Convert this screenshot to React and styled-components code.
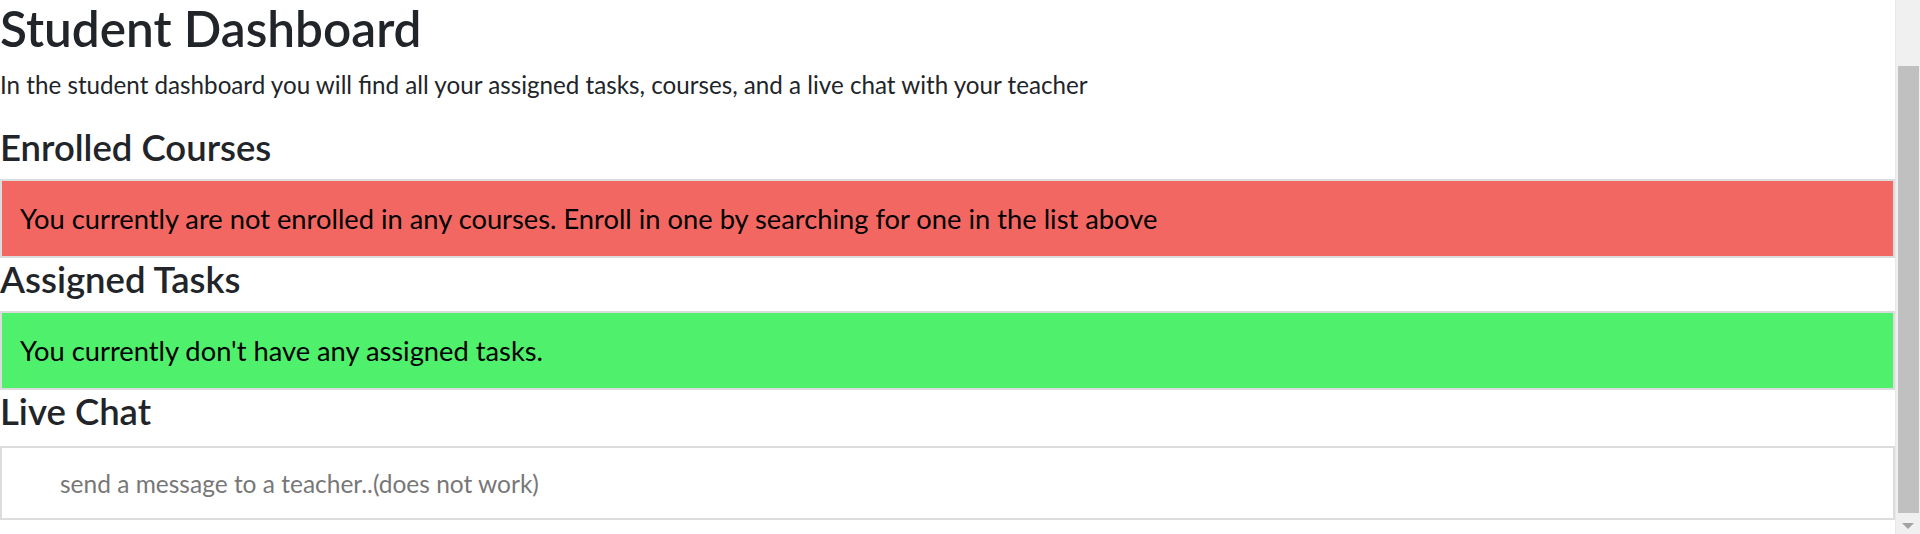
import React from 'react'
import styled, { createGlobalStyle } from 'styled-components'

const GlobalStyle = createGlobalStyle`
  html, body {
    margin: 0;
    padding: 0;
    background: #ffffff;
    overflow: hidden;
  }
  body {
    font-family: 'Lato', 'Liberation Sans', sans-serif;
    color: #212529;
  }
`;

const Page = styled.div`
  display: flex;
  align-items: flex-start;
  height: 534px;
  width: 1920px;
`;

const Main = styled.main`
  flex: 1;
  min-width: 0;
  display: flex;
  flex-direction: column;
`;

const Title = styled.h1`
  margin: 0;
  font-size: 49.5px;
  font-weight: 600;
  line-height: 56px;
`;

const Lead = styled.p`
  margin: 14px 0 0;
  font-size: 24.2px;
  line-height: 30px;
`;

const Heading = styled.h3`
  margin: ${props => props.first ? '26px' : '0'} 0 11px;
  font-size: 36.5px;
  font-weight: 600;
  line-height: 42px;
`;

const Notice = styled.div`
  border: 2px solid #dcdcdc;
  background: ${props => props.tone};
  color: #000000;
  font-size: 27.3px;
  line-height: 36px;
  padding: 20px 18px 19px;
`;

const ChatBox = styled.div`
  padding-top: 3px;
  display: flex;
`;

const ChatInput = styled.input`
  flex: 1;
  display: block;
  margin: 0;
  height: 74px;
  box-sizing: border-box;
  border: 2px solid #dcdcdc;
  padding: 0 0 0 58px;
  font-family: 'Lato', 'Liberation Sans', sans-serif;
  font-size: 24.5px;
  color: #495057;
  background: #ffffff;
  outline: none;

  &::placeholder {
    color: #777777;
  }
`;

const Scrollbar = styled.div`
  width: 25px;
  height: 534px;
  background: #f0f0f0;
  border-left: 1px solid #e8e8e8;
  box-sizing: border-box;
  display: flex;
  flex-direction: column;
  align-items: center;
  padding-top: 66px;
`;

const Thumb = styled.div`
  width: 21px;
  height: 447px;
  background: #c0c0c0;
`;

const Arrow = styled.div`
  margin-top: 10px;
  width: 0;
  height: 0;
  border-left: 6px solid transparent;
  border-right: 6px solid transparent;
  border-top: 6px solid #a3a3a3;
`;

const App = () => {
  return (
    <>
      <GlobalStyle />
      <Page>
        <Main>
          <Title>Student Dashboard</Title>
          <Lead>In the student dashboard you will find all your assigned tasks, courses, and a live chat with your teacher</Lead>
          <Heading first>Enrolled Courses</Heading>
          <Notice tone="#f36763">You currently are not enrolled in any courses. Enroll in one by searching for one in the list above</Notice>
          <Heading>Assigned Tasks</Heading>
          <Notice tone="#4ff06b">You currently don't have any assigned tasks.</Notice>
          <Heading>Live Chat</Heading>
          <ChatBox>
            <ChatInput placeholder="send a message to a teacher..(does not work)" />
          </ChatBox>
        </Main>
        <Scrollbar>
          <Thumb />
          <Arrow />
        </Scrollbar>
      </Page>
    </>
  );
}

export default App;
